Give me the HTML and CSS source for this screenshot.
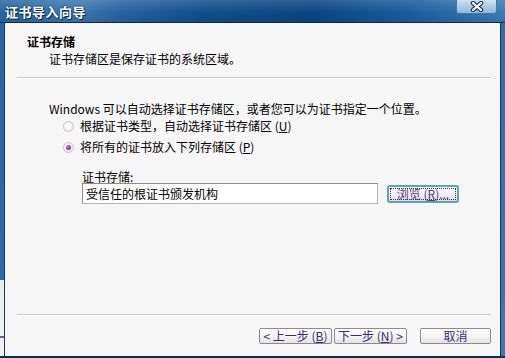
FILE: index.html
```html
<!DOCTYPE html>
<html lang="zh-CN">
<head>
<meta charset="utf-8">
<title>证书导入向导</title>
<link rel="stylesheet" href="styles.css">
</head>
<body>
<div class="window">
  <div class="titlebar">
    <span class="title">证书导入向导</span>
    <div class="close">
      <svg class="close-x" width="14" height="11" viewBox="0 0 14 11">
        <path d="M3 2 L11 9 M11 2 L3 9" stroke="#1f3b5c" stroke-width="4.5" stroke-linecap="round" fill="none"/>
        <path d="M3 2 L11 9 M11 2 L3 9" stroke="#ffffff" stroke-width="2.2" stroke-linecap="round" fill="none"/>
      </svg>
    </div>
  </div>
  <div class="frame">
    <div class="edge-left"></div>
    <div class="client">
      <div class="header">
        <div class="h-title">证书存储</div>
        <div class="h-sub">证书存储区是保存证书的系统区域。</div>
      </div>
      <div class="sep"></div>
      <div class="main">
        <p class="intro">Windows 可以自动选择证书存储区，或者您可以为证书指定一个位置。</p>
        <div class="radio-row first"><span class="radio"></span><span>根据证书类型，自动选择证书存储区 (<u>U</u>)</span></div>
        <div class="radio-row second"><span class="radio checked"></span><span>将所有的证书放入下列存储区 (<u>P</u>)</span></div>
        <div class="store">
          <div class="store-label">证书存储:</div>
          <div class="store-row">
            <div class="field">受信任的根证书颁发机构</div>
            <div class="btn browse"><span class="focus">浏览 (<u>R</u>)...</span></div>
          </div>
        </div>
      </div>
      <div class="footer">
        <div class="sep"></div>
        <div class="buttons">
          <div class="btn nav">&lt; 上一步 (<u>B</u>)</div>
          <div class="btn nav">下一步 (<u>N</u>) &gt;</div>
          <div class="btn cancel">取消</div>
        </div>
      </div>
    </div>
    <div class="edge-right"></div>
  </div>
  <div class="edge-bottom"></div>
</div>
</body>
</html>
```

FILE: styles.css
```css
* { box-sizing: border-box; }

html, body {
  margin: 0;
  padding: 0;
}

body {
  width: 505px;
  height: 358px;
  overflow: hidden;
  font-family: "Noto Sans CJK SC", "Noto Sans", sans-serif;
  font-size: 12px;
  color: #000;
  background: #f0f0f0;
}

.window {
  width: 505px;
  height: 358px;
  display: flex;
  flex-direction: column;
}

.titlebar {
  height: 23px;
  flex: none;
  display: flex;
  align-items: flex-start;
  border-bottom: 1px solid #0b2a4c;
  background:
    linear-gradient(180deg, rgba(255,255,255,0.14) 0%, rgba(255,255,255,0) 55%, rgba(0,0,0,0.08) 100%),
    linear-gradient(100deg, #2c66a0 0%, #3c78b0 16%, #2a63a0 24%, #124f8a 40%, #0b4682 62%, #1a5c9b 80%, #3b7cb7 100%);
}

.title {
  padding: 3px 0 0 5px;
  font-size: 13px;
  line-height: 17px;
  font-weight: bold;
  color: #fff;
  text-shadow: 1px 1px 0 #0a2a4a, 0 0 2px #0a2a4a;
  letter-spacing: 0.5px;
}

.close {
  margin-left: auto;
  margin-right: 8px;
  width: 41px;
  height: 14px;
  display: flex;
  align-items: center;
  justify-content: center;
  border: 1px solid #4a78a4;
  border-top: none;
  border-radius: 0 0 3px 3px;
  background: linear-gradient(180deg, #cfe2f2 0%, #aac8e3 55%, #93b7d8 100%);
}

.close-x {
  display: block;
  flex: none;
}

.frame {
  flex: 1;
  display: flex;
  min-height: 0;
}

.edge-left {
  width: 4px;
  flex: none;
  background:
    linear-gradient(180deg, transparent 313px, #8a4f9c 313px, #8a4f9c 315px, transparent 315px),
    linear-gradient(180deg, #2a64a0 0, #2f6aa6 257px, #ececec 257px, #f2f2f2 100%);
}

.edge-right {
  width: 4px;
  flex: none;
  background: linear-gradient(180deg, #2f6eab, #3a79b6);
}

.edge-bottom {
  height: 2px;
  flex: none;
  background: #0e2c4e;
}

.client {
  flex: 1;
  display: flex;
  flex-direction: column;
  background: #f6f6f6;
  border-left: 1px solid #123a63;
  border-right: 1px solid #123a63;
}

.header {
  padding: 12px 0 0 22px;
}

.h-title {
  font-weight: bold;
  line-height: 14px;
}

.h-sub {
  margin: 3px 0 0 22px;
  line-height: 14px;
}

.sep {
  height: 2px;
  margin: 11px 9px 0 12px;
  border-top: 1px solid #c9c9c9;
  border-bottom: 1px solid #ffffff;
}

.main {
  padding-left: 44px;
}

.intro {
  margin: 23px 0 0 0;
  line-height: 14px;
}

.radio-row {
  display: flex;
  align-items: center;
  height: 14px;
  line-height: 14px;
  padding-left: 14px;
}

.radio-row.first { margin-top: 3px; }
.radio-row.second { margin-top: 7px; }

.radio {
  width: 11px;
  height: 11px;
  margin-right: 6px;
  border-radius: 50%;
  border: 1px solid #cdbfd6;
  background: radial-gradient(circle at 40% 35%, #ffffff 0%, #f3eef6 60%, #e4dbe9 100%);
  display: flex;
  align-items: center;
  justify-content: center;
}

.radio.checked::after {
  content: "";
  width: 5px;
  height: 5px;
  border-radius: 50%;
  background: radial-gradient(circle at 35% 35%, #c07cc4 0%, #8a3a90 60%, #6e2a78 100%);
}

.store {
  padding-left: 33px;
  margin-top: 17px;
}

.store-label {
  line-height: 12px;
}

.store-row {
  display: flex;
  align-items: center;
  margin-top: 0;
}

.field {
  width: 296px;
  height: 21px;
  padding: 0 3px;
  line-height: 19px;
  background: #fff;
  border: 1px solid #8c8c8c;
  border-right-color: #b4b4b4;
  border-bottom-color: #b4b4b4;
}

.btn {
  display: flex;
  align-items: center;
  justify-content: center;
  line-height: 14px;
  color: #3e2b6e;
  white-space: nowrap;
}

.browse {
  margin-left: 9px;
  width: 72px;
  height: 18px;
  border: 2px solid #5aa6b8;
  border-radius: 3px;
  background: linear-gradient(180deg, #ffffff 0%, #f1eef6 60%, #e2dcea 100%);
  color: #55378a;
  padding: 1px;
}

.browse .focus {
  width: 100%;
  height: 100%;
  display: flex;
  align-items: center;
  justify-content: center;
  border: 1px dotted #333;
  line-height: 12px;
}

.footer {
  margin-top: auto;
}

.footer .sep {
  margin-top: 0;
}

.buttons {
  display: flex;
  justify-content: flex-end;
  padding: 12px 9px 12px 0;
}

.nav, .cancel {
  height: 16px;
  border: 1px solid #8b8b8b;
  border-radius: 2px;
  background: linear-gradient(180deg, #ffffff 0%, #f3f2f2 55%, #e3e1e1 100%);
}

.nav {
  width: 73px;
  margin-left: 2px;
}

.cancel {
  width: 71px;
  margin-left: 13px;
}

u {
  text-decoration: underline;
}
```
